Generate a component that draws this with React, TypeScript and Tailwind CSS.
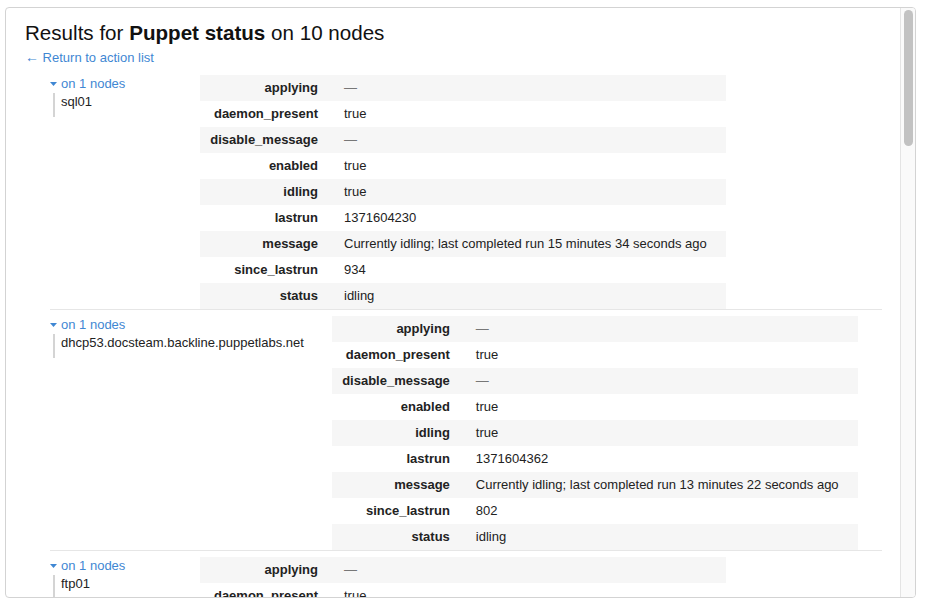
import React from "react";

type Row = { key: string; value: string };

interface NodeGroup {
  id: string;
  nodes: string[];
  rows: Row[];
}

const statusRows = (lastrun: string, ago: string, since: string): Row[] => [
  { key: "applying", value: "—" },
  { key: "daemon_present", value: "true" },
  { key: "disable_message", value: "—" },
  { key: "enabled", value: "true" },
  { key: "idling", value: "true" },
  { key: "lastrun", value: lastrun },
  { key: "message", value: `Currently idling; last completed run ${ago} ago` },
  { key: "since_lastrun", value: since },
  { key: "status", value: "idling" },
];

const groups: NodeGroup[] = [
  { id: "g1", nodes: ["sql01"], rows: statusRows("1371604230", "15 minutes 34 seconds", "934") },
  {
    id: "g2",
    nodes: ["dhcp53.docsteam.backline.puppetlabs.net"],
    rows: statusRows("1371604362", "13 minutes 22 seconds", "802"),
  },
  { id: "g3", nodes: ["ftp01"], rows: statusRows("1371604301", "14 minutes 3 seconds", "863") },
];

function Caret() {
  return (
    <svg width="7" height="4" viewBox="0 0 7 4" className="mr-[4px] inline-block" aria-hidden="true">
      <path d="M0 0h7L3.5 4z" fill="#3f87d3" />
    </svg>
  );
}

function ResultTable({ rows }: { rows: Row[] }) {
  return (
    <table className="w-[526px] flex-none border-collapse text-[13px] leading-[16px]">
      <tbody>
        {rows.map((row, i) => (
          <tr key={row.key} className={i % 2 === 0 ? "bg-[#f6f6f6]" : "bg-white"}>
            <td className="h-[26px] w-[130px] pr-[12px] text-right align-middle font-bold text-[#222]">
              {row.key}
            </td>
            <td className="h-[26px] pl-[14px] align-middle text-[#222]">
              {row.value === "—" ? <span className="text-[#777]">{row.value}</span> : row.value}
            </td>
          </tr>
        ))}
      </tbody>
    </table>
  );
}

function GroupBlock({ group }: { group: NodeGroup }) {
  return (
    <div className="flex items-start border-b border-[#e6e6e6] pt-[6px]">
      <div className="min-w-[150px] flex-none pr-[28px] text-[13px] leading-[16px]">
        <div className="mt-[1px] flex items-center text-[#3f87d3]">
          <Caret />
          on {group.nodes.length} nodes
        </div>
        <ul className="mt-[1px] ml-[3px] border-l-2 border-[#d4d4d4] pt-[1px] pb-[7px] pl-[6px] text-[#222]">
          {group.nodes.map((n) => (
            <li key={n}>{n}</li>
          ))}
        </ul>
      </div>
      <ResultTable rows={group.rows} />
    </div>
  );
}

export default function App() {
  return (
    <div
      className="h-[607px] w-[928px] bg-white pt-[7px] pl-[5px]"
      style={{ fontFamily: '"Liberation Sans", Arial, sans-serif' }}
    >
      <div className="flex h-[591px] w-[911px] overflow-hidden rounded-[4px] border border-[#d3d3d3]">
        {/* Content */}
        <div className="min-w-0 flex-1 overflow-hidden">
          <div className="pt-[12px] pl-[19px]">
            <h1 className="text-[20.6px] leading-[25px] font-normal text-[#111]">
              Results for <span className="font-bold">Puppet status</span> on 10 nodes
            </h1>
            <a href="#" className="mt-[4px] block text-[13px] leading-[16px] text-[#3f87d3]">
              <span className="text-[14px]">←</span> Return to action list
            </a>
          </div>
          <div className="mt-[3px] mr-[18px] ml-[44px]">
            {groups.map((g) => (
              <GroupBlock key={g.id} group={g} />
            ))}
          </div>
        </div>
        {/* Scrollbar */}
        <div className="w-[15px] flex-none border-l border-[#e4e4e4] bg-[#fafafa] pt-[2px] pl-[3px]">
          <div className="h-[136px] w-[9px] rounded-full bg-[#c2c2c2]" />
        </div>
      </div>
    </div>
  );
}
